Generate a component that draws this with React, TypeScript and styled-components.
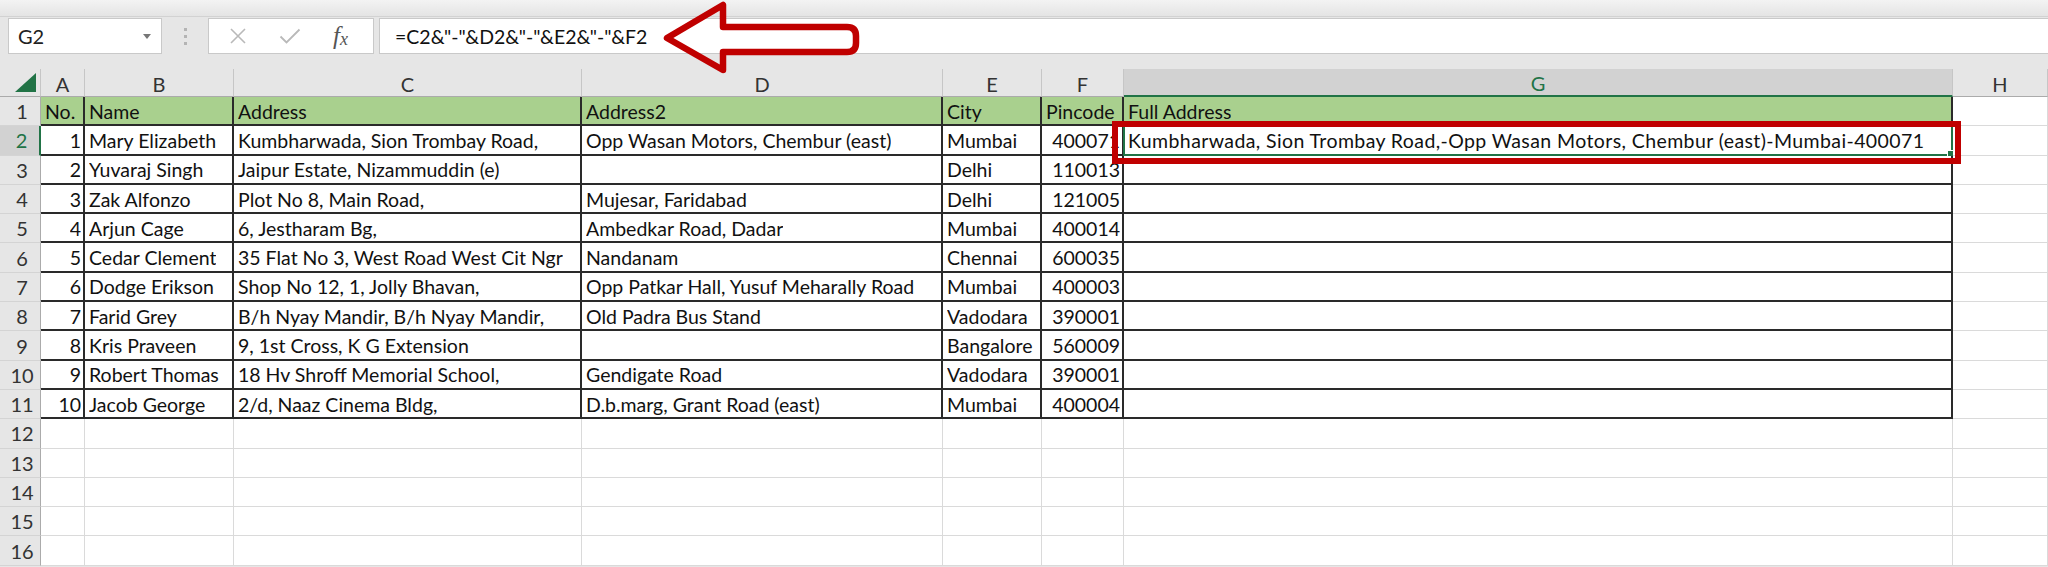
import styled, { createGlobalStyle } from 'styled-components';

const GlobalStyle = createGlobalStyle`
  html, body {
    margin: 0;
    padding: 0;
    background: #e6e6e6;
    overflow: hidden;
  }
  body {
    font-family: Lato, "Liberation Sans", sans-serif;
  }
`;

const colWidths = ['41px', '44px', '149px', '348px', '361px', '99px', '82px', '829px', '1fr'];
const colIds = ['A', 'B', 'C', 'D', 'E', 'F', 'G', 'H'];
const numericCols = [0, 5];

const tableRows = [
  ['No.', 'Name', 'Address', 'Address2', 'City', 'Pincode', 'Full Address'],
  ['1', 'Mary Elizabeth', 'Kumbharwada, Sion Trombay Road,', 'Opp Wasan Motors, Chembur (east)', 'Mumbai', '400071', 'Kumbharwada, Sion Trombay Road,-Opp Wasan Motors, Chembur (east)-Mumbai-400071'],
  ['2', 'Yuvaraj Singh', 'Jaipur Estate, Nizammuddin (e)', '', 'Delhi', '110013', ''],
  ['3', 'Zak Alfonzo', 'Plot No 8, Main Road,', 'Mujesar, Faridabad', 'Delhi', '121005', ''],
  ['4', 'Arjun Cage', '6, Jestharam Bg,', 'Ambedkar Road, Dadar', 'Mumbai', '400014', ''],
  ['5', 'Cedar Clement', '35 Flat No 3, West Road West Cit Ngr', 'Nandanam', 'Chennai', '600035', ''],
  ['6', 'Dodge Erikson', 'Shop No 12, 1, Jolly Bhavan,', 'Opp Patkar Hall, Yusuf Meharally Road', 'Mumbai', '400003', ''],
  ['7', 'Farid Grey', 'B/h Nyay Mandir, B/h Nyay Mandir,', 'Old Padra Bus Stand', 'Vadodara', '390001', ''],
  ['8', 'Kris Praveen', '9, 1st Cross, K G Extension', '', 'Bangalore', '560009', ''],
  ['9', 'Robert Thomas', '18 Hv Shroff Memorial School,', 'Gendigate Road', 'Vadodara', '390001', ''],
  ['10', 'Jacob George', '2/d, Naaz Cinema Bldg,', 'D.b.marg, Grant Road (east)', 'Mumbai', '400004', ''],
];

const TOTAL_ROWS = 16;
const SELECTED_ROW = 2;
const SELECTED_COL = 6;

export default function App() {
  const rows = Array.from({ length: TOTAL_ROWS }, (_, i) => tableRows[i] || []);
  return (
    <Page>
      <GlobalStyle />
      <TopStrip />
      <FormulaBar>
        <NameBox>
          <span>G2</span>
          <Caret />
        </NameBox>
        <Grip>
          <i />
          <i />
          <i />
        </Grip>
        <ButtonBox>
          <svg width="18" height="18" viewBox="0 0 18 18">
            <path d="M2 2 L16 16 M16 2 L2 16" stroke="#b9b9b9" strokeWidth="1.6" fill="none" />
          </svg>
          <svg width="22" height="16" viewBox="0 0 22 16">
            <path d="M1.5 8.5 L7.5 14.5 L20.5 1.5" stroke="#b9b9b9" strokeWidth="1.8" fill="none" />
          </svg>
          <FxLabel>
            f<sub>x</sub>
          </FxLabel>
        </ButtonBox>
        <FormulaInput>
          =C2&amp;"-"&amp;D2&amp;"-"&amp;E2&amp;"-"&amp;F2
          <Arrow width="230" height="80" viewBox="0 0 230 80">
            <path
              d="M6 39 L62 6 L62 28 L186 28 Q195 28 195 37 L195 44 Q195 53 186 53 L62 53 L62 71 Z"
              fill="none"
              stroke="#c00000"
              strokeWidth="6.5"
              strokeLinejoin="round"
            />
          </Arrow>
        </FormulaInput>
      </FormulaBar>
      <Sheet>
        <Corner>
          <svg width="21" height="19" viewBox="0 0 21 19">
            <path d="M21 0 L21 19 L0 19 Z" fill="#217346" />
          </svg>
        </Corner>
        {colIds.map((id, c) => (
          <ColHeader key={id} $selected={c === SELECTED_COL}>
            {id}
          </ColHeader>
        ))}
        {rows.map((cells, r) => {
          const rowNo = r + 1;
          const inTable = r < tableRows.length;
          return [
            <RowHeader key={`h${rowNo}`} $selected={rowNo === SELECTED_ROW}>
              {rowNo}
            </RowHeader>,
            ...colIds.map((id, c) => {
              const boxed = inTable && c < 7;
              const selected = rowNo === SELECTED_ROW && c === SELECTED_COL;
              return (
                <Cell
                  key={`${id}${rowNo}`}
                  $boxed={boxed}
                  $fill={rowNo === 1 && c < 7}
                  $right={rowNo > 1 && numericCols.includes(c)}
                >
                  {cells[c] && <CellText $wide={selected}>{cells[c]}</CellText>}
                  {selected && (
                    <>
                      <ActiveCell>
                        <FillHandle />
                      </ActiveCell>
                      <Highlight />
                    </>
                  )}
                </Cell>
              );
            }),
          ];
        })}
      </Sheet>
    </Page>
  );
}

const Page = styled.div`
  width: 2048px;
  height: 567px;
  overflow: hidden;
  background: #e6e6e6;
  color: #111;
`;

const TopStrip = styled.div`
  height: 16px;
  background: linear-gradient(#f3f3f3, #e4e4e4);
  border-bottom: 1px solid #d2d2d2;
`;

const FormulaBar = styled.div`
  display: flex;
  align-items: stretch;
  height: 36px;
  padding: 1px 0 0 8px;
  margin-bottom: 15px;
`;

const NameBox = styled.div`
  width: 154px;
  box-sizing: border-box;
  display: flex;
  align-items: center;
  justify-content: space-between;
  padding: 0 10px 0 9px;
  background: #fff;
  border: 1px solid #c9c9c9;
  font-size: 20px;
  color: #222;
`;

const Caret = styled.span`
  width: 0;
  height: 0;
  border-left: 4px solid transparent;
  border-right: 4px solid transparent;
  border-top: 5px solid #777;
`;

const Grip = styled.div`
  width: 46px;
  display: flex;
  flex-direction: column;
  align-items: center;
  justify-content: center;
  gap: 4px;
  i {
    width: 3px;
    height: 3px;
    background: #b4b4b4;
  }
`;

const ButtonBox = styled.div`
  width: 166px;
  box-sizing: border-box;
  display: flex;
  align-items: center;
  gap: 32px;
  padding-left: 20px;
  background: #fff;
  border: 1px solid #c9c9c9;
`;

const FxLabel = styled.span`
  font-family: "Liberation Serif", serif;
  font-style: italic;
  font-size: 25px;
  color: #555;
  sub {
    font-size: 18px;
    vertical-align: -1px;
  }
`;

const FormulaInput = styled.div`
  position: relative;
  flex: 1;
  margin-left: 5px;
  display: flex;
  align-items: center;
  padding-left: 15px;
  background: #fff;
  border: 1px solid #c9c9c9;
  border-right: none;
  font-size: 19.5px;
  color: #111;
  white-space: pre;
`;

const Arrow = styled.svg`
  position: absolute;
  left: 281px;
  top: -20px;
  overflow: visible;
`;

const Sheet = styled.div`
  display: grid;
  grid-template-columns: ${colWidths.join(' ')};
  grid-template-rows: 28px repeat(${TOTAL_ROWS}, 29.3px);
  background: #fff;
`;

const Corner = styled.div`
  background: #e6e6e6;
  border-right: 1px solid #c6c6c6;
  border-bottom: 1px solid #ababab;
  display: flex;
  align-items: flex-end;
  justify-content: flex-end;
  padding: 0 4px 4px 0;
`;

const ColHeader = styled.div<{ $selected?: boolean }>`
  box-sizing: border-box;
  display: flex;
  align-items: center;
  justify-content: center;
  background: ${(p) => (p.$selected ? '#d2d2d2' : '#e6e6e6')};
  color: ${(p) => (p.$selected ? '#217346' : '#333')};
  border-right: 1px solid #c6c6c6;
  border-bottom: ${(p) => (p.$selected ? '2px solid #217346' : '1px solid #ababab')};
  font-size: 20px;
  padding-top: 2px;
`;

const RowHeader = styled.div<{ $selected?: boolean }>`
  box-sizing: border-box;
  display: flex;
  align-items: center;
  justify-content: center;
  background: ${(p) => (p.$selected ? '#d2d2d2' : '#e6e6e6')};
  color: ${(p) => (p.$selected ? '#217346' : '#333')};
  border-right: ${(p) => (p.$selected ? '2px solid #217346' : '1px solid #ababab')};
  border-bottom: 1px solid #d4d4d4;
  font-size: 20px;
  padding-left: 4px;
`;

const Cell = styled.div<{ $boxed?: boolean; $fill?: boolean; $right?: boolean }>`
  position: relative;
  box-sizing: border-box;
  min-width: 0;
  display: flex;
  align-items: center;
  justify-content: ${(p) => (p.$right ? 'flex-end' : 'flex-start')};
  padding: 1px 2px 0 4px;
  background: ${(p) => (p.$fill ? '#a9d08e' : '#fff')};
  border-right: ${(p) => (p.$boxed ? '2px solid #2a2a2a' : '1px solid #dadada')};
  border-bottom: ${(p) => (p.$boxed ? '2px solid #2a2a2a' : '1px solid #dadada')};
  font-size: 19.5px;
  color: #111;
`;

const CellText = styled.span<{ $wide?: boolean }>`
  white-space: nowrap;
  overflow: hidden;
  letter-spacing: ${(p) => (p.$wide ? '0.4px' : 'normal')};
`;

const ActiveCell = styled.div`
  position: absolute;
  inset: -1px -2px -2px -1px;
  border: 2px solid #217346;
  pointer-events: none;
`;

const FillHandle = styled.div`
  position: absolute;
  right: -5px;
  bottom: -5px;
  width: 7px;
  height: 7px;
  background: #217346;
  border: 1px solid #fff;
`;

const Highlight = styled.div`
  position: absolute;
  left: -12px;
  right: -10px;
  top: -5px;
  bottom: -10px;
  border: 6px solid #c00000;
  pointer-events: none;
  z-index: 2;
`;
